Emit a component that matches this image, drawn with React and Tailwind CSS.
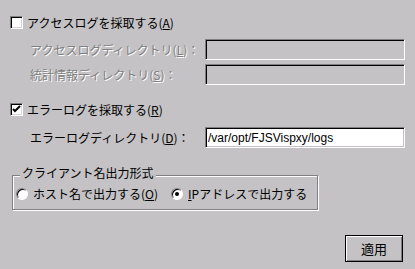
import React from 'react';

const jp = "font-['Noto_Sans_CJK_JP','Noto_Sans',sans-serif]";

const Checkbox = ({ checked }) => (
  <span className="w-[13px] h-[13px] shrink-0 bg-white border border-t-[#808080] border-l-[#808080] border-r-white border-b-white shadow-[inset_1px_1px_0_#000,inset_-1px_-1px_0_#d4d4d4] flex items-center justify-center">
    {checked && (
      <svg width="9" height="9" viewBox="0 0 9 9">
        <path d="M1 4 L3 6 L8 1" fill="none" stroke="#000" strokeWidth="2" />
      </svg>
    )}
  </span>
);

const Radio = ({ checked }) => (
  <span className="w-[12px] h-[12px] shrink-0 rounded-full bg-white border border-t-[#808080] border-l-[#808080] border-r-white border-b-white shadow-[inset_1px_1px_0_#000] flex items-center justify-center">
    {checked && <span className="w-[4px] h-[4px] rounded-full bg-black" />}
  </span>
);

const Field = ({ value, disabled }) => (
  <div
    className={`w-[200px] h-[21px] border border-t-[#808080] border-l-[#808080] border-r-white border-b-white shadow-[inset_1px_1px_0_#000,inset_-1px_-1px_0_#c4c2c4] flex items-center pl-[2px] text-[12px] text-black font-['Liberation_Sans',sans-serif] ${
      disabled ? 'bg-[#c4c2c4]' : 'bg-white'
    }`}
  >
    {value}
  </div>
);

const dim = 'text-[#808080] [text-shadow:1px_1px_0_#fff]';

const App = () => {
  return (
    <div className={`w-[415px] h-[269px] bg-[#c4c2c4] text-black text-[12px] leading-[14px] ${jp}`}>
      <div className="pt-[15px]">
        <div className="flex items-center gap-[4px] pl-[10px] h-[15px]">
          <Checkbox />
          <span>アクセスログを採取する(<u>A</u>)</span>
        </div>

        <div className="flex items-center pl-[30px] mt-[9px]">
          <span className={`w-[175px] ${dim}`}>アクセスログディレクトリ(<u>L</u>)：</span>
          <Field disabled />
        </div>
        <div className="flex items-center pl-[30px] mt-[4px]">
          <span className={`w-[175px] ${dim}`}>統計情報ディレクトリ(<u>S</u>)：</span>
          <Field disabled />
        </div>

        <div className="flex items-center gap-[4px] pl-[10px] h-[15px] mt-[17px]">
          <Checkbox checked />
          <span>エラーログを採取する(<u>R</u>)</span>
        </div>

        <div className="flex items-center pl-[30px] mt-[10px]">
          <span className="w-[175px]">エラーログディレクトリ(<u>D</u>)：</span>
          <Field value="/var/opt/FJSVispxy/logs" />
        </div>

        <fieldset className="ml-[12px] mt-[18px] w-[306px] border border-[#808080] shadow-[1px_1px_0_#fff,inset_1px_1px_0_#fff] pl-[3px] pb-[8px] pt-[3px]">
          <legend className="ml-[4px] px-[2px] pb-[4px] bg-[#c4c2c4]">クライアント名出力形式</legend>
          <div className="flex items-center h-[14px]">
            <Radio />
            <span className="ml-[5px]">ホスト名で出力する(<u>O</u>)</span>
            <span className="ml-[13px]">
              <Radio checked />
            </span>
            <span className="ml-[5px]">
              <u>I</u>Pアドレスで出力する
            </span>
          </div>
        </fieldset>

        <div className="flex justify-end pr-[12px] mt-[25px]">
          <button className="w-[58px] h-[27px] border border-black bg-[#c4c2c4] shadow-[inset_1px_1px_0_#fff,inset_-1px_-1px_0_#808080] flex items-center justify-center text-[13px]">
            適用
          </button>
        </div>
      </div>
    </div>
  );
};

export default App;
